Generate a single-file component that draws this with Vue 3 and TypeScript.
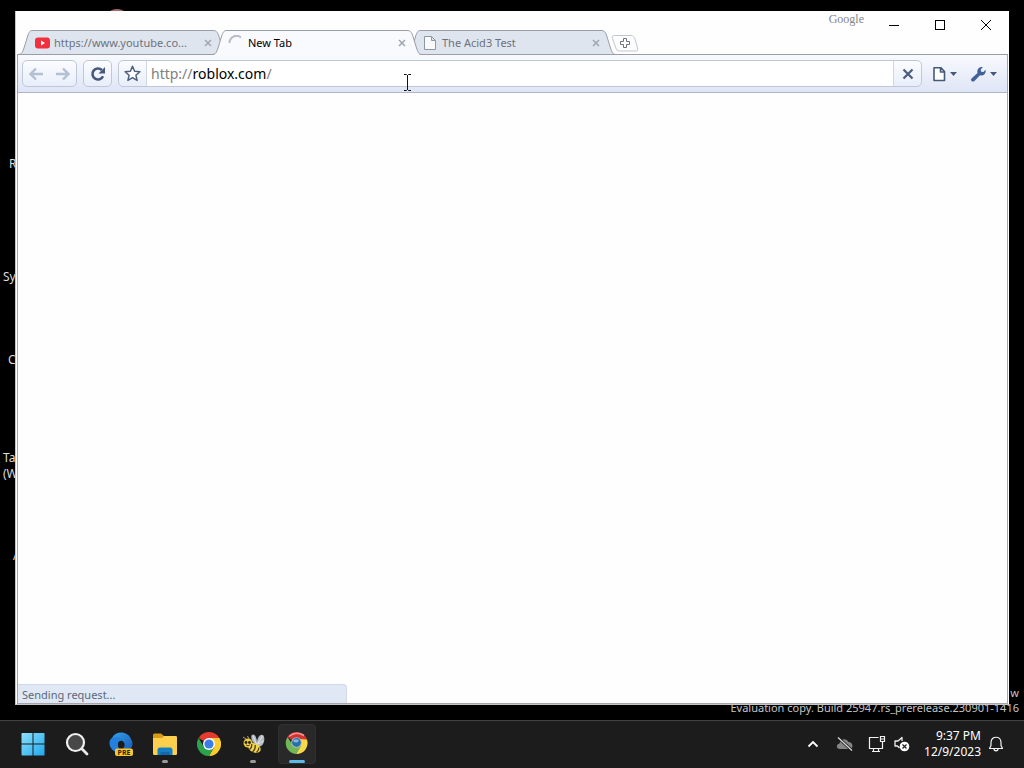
<script setup lang="ts">
import { ref } from 'vue'

interface Tab {
  title: string
  icon: 'video' | 'spinner' | 'page'
  active: boolean
}

const tabs: Tab[] = [
  { title: 'https://www.youtube.co...', icon: 'video', active: false },
  { title: 'New Tab', icon: 'spinner', active: true },
  { title: 'The Acid3 Test', icon: 'page', active: false },
]

const address = ref('http://roblox.com/')
</script>

<template>
  <div class="screen">
    <main class="desktop">
      <div class="orb"></div>
      <span class="label recycle">R</span>
      <span class="label system">Sy</span>
      <span class="label control">C</span>
      <span class="label task">Ta<br />(W</span>
      <span class="label app">A</span>
      <div class="watermark">w<br />Evaluation copy. Build 25947.rs_prerelease.230901-1416</div>

      <section class="window">
        <header class="titlebar">
          <div class="tabs">
            <div v-for="tab in tabs" :key="tab.title" class="tab" :class="{ active: tab.active }">
              <svg class="shape" viewBox="0 0 208 25" preserveAspectRatio="none">
                <path class="fill" d="M0 25 C3 24.500 3.500 22 5 18 L9 5 C10.500 1.500 11 .5 14 .5 H194 C197 .5 198 1.500 199.500 5 L203.500 18 C205 22 205.500 24.500 208 25 Z" />
                <path class="edge" d="M0 24.500 C3 24 3.500 22 5 18 L9 5 C10.500 1.500 11 .5 14 .5 H194 C197 .5 198 1.500 199.500 5 L203.500 18 C205 22 205.500 24 208 24.500" />
                <path v-if="!tab.active" class="edge" d="M0 24.500 H208" />
              </svg>
              <svg v-if="tab.icon === 'video'" class="favicon" viewBox="0 0 16 16">
                <rect x="1" y="2.500" width="15" height="11" rx="3" fill="#f0303c" />
                <path d="M7 5.500 L11 8 L7 10.500 Z" fill="#fff" />
              </svg>
              <svg v-else-if="tab.icon === 'spinner'" class="favicon" viewBox="0 0 16 16">
                <path d="M1.500 8 A7 7 0 0 1 13 2.500" fill="none" stroke="#b4bcc8" stroke-width="2" />
              </svg>
              <svg v-else class="favicon" viewBox="0 0 16 16">
                <path d="M2.500 1.500 H9.500 L13.500 5.500 V14.500 H2.500 Z M9.500 1.500 V5.500 H13.500" fill="#f8fafc" stroke="#9097a0" />
              </svg>
              <span class="title">{{ tab.title }}</span>
              <button class="close" :aria-label="'Close ' + tab.title">
                <svg viewBox="0 0 8 8" width="8" height="8"><path d="M1 1 L7 7 M7 1 L1 7" stroke="#a2a8b2" stroke-width="1.600" /></svg>
              </button>
            </div>
            <button class="newtab" aria-label="New tab">
              <svg viewBox="0 0 28 17" width="28" height="17">
                <path d="M4 .5 H20 C22 .5 23 1.500 24 4 L26.500 13 C27 15.500 26.500 16 25 16 H8.500 C6.500 16 5.500 15 4.500 12 L1.500 3.500 C.8 1.200 1.500 .5 4 .5 Z" fill="#fcfdff" stroke="#c3c6cc" />
                <path d="M12.500 3.500 H15.500 V6.500 H18.500 V9.500 H15.500 V12.500 H12.500 V9.500 H9.500 V6.500 H12.500 Z" fill="#fff" stroke="#6e7278" />
              </svg>
            </button>
          </div>
          <div class="controls">
            <span class="brand">Google</span>
            <button aria-label="Minimize"><svg viewBox="0 0 12 12"><path d="M1 6.500 H11" /></svg></button>
            <button aria-label="Maximize"><svg viewBox="0 0 12 12"><rect x="1.500" y="1.500" width="9" height="9" /></svg></button>
            <button aria-label="Close"><svg viewBox="0 0 12 12"><path d="M1 1 L11 11 M11 1 L1 11" /></svg></button>
          </div>
        </header>

        <div class="frame">
          <nav class="toolbar">
            <div class="group history">
              <button aria-label="Back">
                <svg viewBox="0 0 16 16" width="16" height="16"><path d="M8 2.500 L2.500 8 L8 13.500 M3 8 H15" fill="none" stroke="#b3bfd2" stroke-width="2.400" /></svg>
              </button>
              <button aria-label="Forward">
                <svg viewBox="0 0 16 16" width="16" height="16"><path d="M8 2.500 L13.500 8 L8 13.500 M13 8 H1" fill="none" stroke="#b3bfd2" stroke-width="2.400" /></svg>
              </button>
            </div>
            <button class="group reload" aria-label="Reload">
              <svg viewBox="0 0 16 16" width="16" height="16">
                <path d="M13 10.200 A5.500 5.500 0 1 1 11.800 4" fill="none" stroke="#46597b" stroke-width="2.600" />
                <path d="M15 1 V7.500 H8.500 Z" fill="#46597b" />
              </svg>
            </button>
            <form class="group omnibox" @submit.prevent>
              <button type="button" class="star" aria-label="Bookmark this page">
                <svg viewBox="0 0 17 17" width="17" height="17"><path d="M8.500 1.300 L10.600 6.200 L15.900 6.700 L11.900 10.200 L13.100 15.400 L8.500 12.600 L3.900 15.400 L5.100 10.200 L1.100 6.700 L6.400 6.200 Z" fill="#fff" stroke="#4c5f80" stroke-width="1.500" stroke-linejoin="round" /></svg>
              </button>
              <div class="address">
                <input v-model="address" aria-label="Address" spellcheck="false" />
                <div class="tinted" aria-hidden="true"><i>http://</i>roblox.com<i>/</i></div>
              </div>
              <button type="button" class="stop" aria-label="Stop">
                <svg viewBox="0 0 12 12" width="12" height="12"><path d="M1.500 1.500 L10.500 10.500 M10.500 1.500 L1.500 10.500" stroke="#4a5c7c" stroke-width="2.200" /></svg>
              </button>
            </form>
            <button class="menu" aria-label="Page menu">
              <svg viewBox="0 0 26 16" width="26" height="16">
                <path d="M2 1.800 H9 L12.500 5.500 V14.500 H2 Z M8.500 2 V6 H12.500" fill="#fff" stroke="#46597b" stroke-width="1.600" stroke-linejoin="round" />
                <path d="M18 6 H25 L21.500 10 Z" fill="#46597b" />
              </svg>
            </button>
            <button class="menu" aria-label="Settings menu">
              <svg viewBox="0 0 28 16" width="28" height="16">
                <path d="M1.500 12.500 L7.500 7 C6.500 3.500 9 .6 13 1.100 L10.700 3.600 L11.200 5.700 L13.400 6 L15.600 3.800 C16.300 7.500 13.500 10.200 10 9.300 L4.500 15 C2.500 16.500 0 14.500 1.500 12.500 Z" fill="#42629a" />
                <path d="M20 6 H27 L23.500 10 Z" fill="#46597b" />
              </svg>
            </button>
          </nav>
          <div class="page">
            <div class="status">Sending request...</div>
          </div>
        </div>
      </section>

      <svg class="caret" viewBox="0 0 9 17" width="9" height="17"><path d="M1 .5 H3.500 L4.500 1.500 L5.500 .5 H8 M4.500 1 V16 M1 16.500 H3.500 L4.500 15.500 L5.500 16.500 H8" fill="none" stroke="#111" /></svg>
    </main>

    <footer class="taskbar">
      <div class="apps">
        <button aria-label="Start">
          <svg viewBox="0 0 24 24">
            <defs><linearGradient id="win" x1="0" y1="0" x2="24" y2="24" gradientUnits="userSpaceOnUse"><stop offset="0" stop-color="#8ee4fb" /><stop offset="1" stop-color="#1ea6ee" /></linearGradient></defs>
            <path d="M1 1 H11.500 V11.500 H0.500 V1.500 Z M12.500 1 H23 L23.500 1.500 V11.500 H12.500 Z M.5 12.500 H11.500 V23.500 H1 L.5 23 Z M12.500 12.500 H23.500 V23 L23 23.500 H12.500 Z" fill="url(#win)" />
          </svg>
        </button>
        <button aria-label="Search">
          <svg viewBox="0 0 24 24"><circle cx="10.500" cy="10.500" r="8.500" fill="#484848" stroke="#f0f0f0" stroke-width="2.200" /><path d="M16.800 16.800 L22 22" stroke="#e8e8e8" stroke-width="2.800" stroke-linecap="round" /></svg>
        </button>
        <button aria-label="Edge preview">
          <svg viewBox="0 0 24 24">
            <defs><linearGradient id="edge" x1="0" y1="0" x2="1" y2="1"><stop offset="0" stop-color="#35a5ec" /><stop offset="1" stop-color="#1759b8" /></linearGradient></defs>
            <path d="M3 6 C7 -2 19 -1 22 7 C24.500 11 23.500 15 21 17 H14 C16.500 14 16 10.500 13.500 9 C10 7.500 8 11 9 14 L10 20 H7 C1 17 -1 10 3 6 Z" fill="url(#edge)" />
            <path d="M1 8 C4 4 10 4 14 8 C10 7.500 8 10.500 9 14 L11 21 C3 20 -1 14 1 8 Z" fill="#2381dd" />
            <rect x="6" y="16.500" width="18" height="7.500" rx="2" fill="#fdc82f" />
            <text x="15" y="23" text-anchor="middle" class="pre">PRE</text>
          </svg>
        </button>
        <button aria-label="File Explorer">
          <svg viewBox="0 0 24 24">
            <path d="M0 3 Q0 1.500 1.500 1.500 H8 L11 4 H22.500 Q24 4 24 5.500 V10 H0 Z" fill="#d99a16" />
            <path d="M0 6 H9 L11 4 H22.500 Q24 4 24 5.500 V22 Q24 23 22.500 23 H1.500 Q0 23 0 22 Z" fill="#fccf4d" />
            <path d="M4.500 23 V18 Q4.500 15.500 7 15.500 H17 Q19.500 15.500 19.500 18 V23 Z" fill="#157fc6" /><path d="M7.500 20 H16.500 V23 H7.500 Z" fill="#0f69aa" />
          </svg>
          <i class="dot"></i>
        </button>
        <button aria-label="Chrome">
          <svg viewBox="0 0 24 24">
            <path d="M12 12 L1.600 6 A12 12 0 0 1 22.400 6 Z" fill="#e33b2e" />
            <path d="M12 6 H22.400 A12 12 0 0 1 12 24 L17.200 15 Z" fill="#fccb30" />
            <path d="M1.600 6 A12 12 0 0 0 12 24 L17.200 15 L12 16 L6.800 15 Z" fill="#2da24c" />
            <circle cx="12" cy="12" r="6" fill="#fff" /><circle cx="12" cy="12" r="4.600" fill="#3a7ce8" />
          </svg>
        </button>
        <button aria-label="Bee">
          <svg viewBox="0 0 24 24">
            <path d="M14 12 C10 9 9 3 12 2.500 C15 2.500 16 8 16 11 C16 5 20 1 22.500 3.500 C24.500 7 23 15 17 14.500 Z" fill="#b3bac4" />
            <path d="M12 4 L15.500 12 M21.500 4 L16.500 12 M22 9 L16.500 12.500" stroke="#edf1f4" stroke-width=".8" />
            <circle cx="7" cy="11" r="4.500" fill="#e9cb36" />
            <ellipse cx="13.500" cy="16" rx="6.500" ry="4.500" transform="rotate(25 13.500 16)" fill="#f4d64c" />
            <path d="M10.500 12 Q11.500 15.500 8.500 17.500 M14 13 Q15 17 11.500 20 M18 15.500 Q18 18 15.500 20.500" fill="none" stroke="#4a3b1a" stroke-width="1.300" />
            <circle cx="5" cy="10.500" r="1.400" fill="#222" /><circle cx="8.500" cy="10.500" r="1.400" fill="#222" />
            <path d="M5 13 Q7 14.500 9 13" fill="none" stroke="#5f4816" /><path d="M5 7 L2 5 M8 7 L6.500 4" stroke="#b6a76b" />
          </svg>
          <i class="dot"></i>
        </button>
        <button class="current" aria-label="Chrome window">
          <svg viewBox="0 0 24 24">
            <path d="M11.500 11 L2.500 5 A11 11 0 0 1 22 7.500 Z" fill="#d53230" />
            <path d="M12 7 L22 7.500 A11 11 0 0 1 11 22 L15.500 14 Z" fill="#f6d849" />
            <path d="M2.500 5 A11 11 0 0 0 11 22 L16 14 L11 15 L7 12 Z" fill="#72b657" />
            <path d="M4 4.500 Q11 -1.500 19 3.500" fill="none" stroke="#ee9c93" stroke-width="1.500" />
            <circle cx="11.500" cy="10.500" r="5.300" fill="#aebfc8" /><circle cx="11.500" cy="10.500" r="4.400" fill="#286fa9" /><ellipse cx="11" cy="8.800" rx="2.800" ry="1.600" fill="#83b8db" />
          </svg>
          <i class="bar"></i>
        </button>
      </div>

      <div class="tray">
        <button class="chevron" aria-label="Show hidden icons"><svg viewBox="0 0 12 12" width="12" height="12"><path d="M1.500 8.500 L6 4 L10.500 8.500" fill="none" stroke="#fff" stroke-width="1.800" /></svg></button>
        <button class="cloud" aria-label="OneDrive">
          <svg viewBox="0 0 18 16" width="18" height="16"><path d="M4 13 C0 13 0 8 3.500 7.500 C4 3 10 1.500 12.500 6 C17 6 18 12.500 14 13 Z" fill="#858585" /><path d="M2 1.500 L16 14.500" stroke="#1d1d1d" stroke-width="3" /><path d="M2 1.500 L16 14.500" stroke="#ddd" stroke-width="1.200" /></svg>
        </button>
        <button class="net" aria-label="Network and sound">
          <svg viewBox="0 0 18 18" width="18" height="18"><path d="M10.500 2.500 H1.500 V13.500 H14.500 V9 M5.500 13.500 V16.500 M10.500 13.500 V16.500 M4 16.500 H12 M12.500 1.500 H16.500 V6.500 H12.500 Z M13 4 H16 M14.500 6.500 V10" fill="none" stroke="#f1f1f1" stroke-width="1.200" /></svg>
          <svg viewBox="0 0 18 18" width="18" height="18"><path d="M9 6 V2.500 L5 6 H2 V11 H4.500 L6.500 13" fill="none" stroke="#f1f1f1" stroke-width="1.300" stroke-linejoin="round" /><circle cx="11.500" cy="11.500" r="4.800" fill="#fff" /><path d="M9.500 9.500 L13.500 13.500 M13.500 9.500 L9.500 13.500" stroke="#222" stroke-width="1.200" /></svg>
        </button>
        <button class="clock">9:37 PM<br />12/9/2023</button>
        <button class="bell" aria-label="Notifications"><svg viewBox="0 0 16 16" width="16" height="16"><path d="M1.500 12.500 L3 9.500 V6.500 C3 -.5 13 -.5 13 6.500 V9.500 L14.500 12.500 Z M6 12.800 C6 15.500 10 15.500 10 12.800" fill="none" stroke="#f4f4f4" stroke-width="1.200" stroke-linejoin="round" /></svg></button>
      </div>
    </footer>
  </div>
</template>

<style>
html,
body {
  background: #000;
}
</style>

<style scoped>
* {
  box-sizing: border-box;
}
.screen {
  display: flex;
  flex-direction: column;
  min-height: 100vh;
  overflow: hidden;
  background: #000;
  color: #fff;
  font: 12px/16px "Noto Sans", "Open Sans", sans-serif;
}
button {
  display: flex;
  align-items: center;
  justify-content: center;
  flex: none;
  margin: 0;
  padding: 0;
  border: 0;
  background: none;
  color: inherit;
  font: inherit;
}
.desktop {
  position: relative;
  flex: 1;
}
.orb {
  position: absolute;
  left: 104px;
  top: 9px;
  width: 26px;
  height: 26px;
  border-radius: 50%;
  background: #a6686a;
}
.label {
  position: absolute;
  color: #ddd;
}
.recycle {
  left: 9px;
  top: 156px;
}
.system {
  left: 3px;
  top: 269px;
}
.control {
  left: 8px;
  top: 352px;
}
.task {
  left: 3px;
  top: 450px;
}
.app {
  left: 13px;
  top: 548px;
}
.watermark {
  position: absolute;
  right: 5px;
  bottom: 5px;
  color: #c4c4c4;
  font-size: 11px;
  line-height: 15px;
  text-align: right;
}
.window {
  position: absolute;
  inset: 11px 15px 15px;
  display: flex;
  flex-direction: column;
  padding: 0 1px;
  background: #fefefe;
  border-left: 1px solid #c9c6c8;
  border-bottom: 1px solid #c9c6c8;
  color: #000;
}
.titlebar {
  display: flex;
  justify-content: space-between;
  height: 44px;
  border-bottom: 1px solid #9a9ea8;
}
.tabs {
  display: flex;
  align-items: flex-end;
  padding-left: 2px;
  margin-bottom: -1px;
}
.tab {
  position: relative;
  display: flex;
  align-items: center;
  width: 208px;
  height: 25px;
  margin-right: -14px;
  padding: 1px 13px 0 15px;
  color: #6c727c;
}
.tab.active {
  z-index: 1;
  color: #000;
}
.shape {
  position: absolute;
  inset: 0;
  width: 100%;
  height: 100%;
}
.fill {
  fill: #dfe5ef;
}
.active .fill {
  fill: #f8fafe;
}
.edge {
  fill: none;
  stroke: #9a9ea8;
}
.favicon {
  position: relative;
  flex: none;
  width: 16px;
  height: 16px;
}
.title {
  position: relative;
  flex: 1;
  margin-left: 4px;
  font-size: 11px;
  white-space: nowrap;
}
.close {
  position: relative;
  width: 12px;
  height: 12px;
}
.newtab {
  width: 28px;
  height: 17px;
  margin: 0 0 3px 10px;
}
.controls {
  display: flex;
  align-items: flex-start;
  margin-right: -1px;
}
.controls button {
  width: 46px;
  height: 28px;
}
.controls svg {
  width: 12px;
  height: 12px;
  fill: none;
  stroke: #000;
}
.brand {
  margin-right: 7px;
  color: #84868c;
  font: 12px/17px "Liberation Serif", serif;
}
.frame {
  display: flex;
  flex-direction: column;
  flex: 1;
  border: 1px solid #a4a4aa;
  border-top: 0;
}
.toolbar {
  display: flex;
  align-items: center;
  height: 38px;
  padding: 0 9px 0 4px;
  border-bottom: 1px solid #aeb6c6;
  background: linear-gradient(#f8fafe, #dfe5f6);
}
.group {
  display: flex;
  height: 27px;
  border: 1px solid #c0c8d8;
  border-radius: 5px;
  background: linear-gradient(#fbfcff, #e8eefa);
}
.history {
  width: 55px;
}
.history button {
  flex: 1;
}
.reload {
  width: 29px;
  margin: 0 6px;
}
.omnibox {
  flex: 1;
  margin-right: 10px;
}
.star {
  width: 28px;
  border-right: 1px solid #d0d7e4;
}
.stop {
  width: 28px;
  border-left: 1px solid #d0d7e4;
}
.address {
  display: grid;
  flex: 1;
  background: #fff;
}
.address input,
.tinted {
  grid-area: 1 / 1;
  min-width: 0;
  margin: 0;
  padding: 0 4px;
  border: 0;
  outline: 0;
  background: none;
  font: 14px/25px "Noto Sans", "Open Sans", sans-serif;
}
.address input {
  color: transparent;
}
.tinted {
  pointer-events: none;
}
.tinted i {
  color: #808080;
  font-style: normal;
}
.menu {
  height: 27px;
}
.menu + .menu {
  margin-left: 12px;
}
.page {
  display: flex;
  align-items: flex-end;
  flex: 1;
  background: #fefefe;
}
.status {
  width: 33.3%;
  height: 19px;
  padding: 0 4px;
  border: 1px solid #d2dae6;
  border-width: 1px 1px 0 0;
  border-radius: 0 4px 0 0;
  background: #dfe8f4;
  color: #5c6878;
  font-size: 11px;
  line-height: 19px;
}
.caret {
  position: absolute;
  left: 403px;
  top: 74px;
}
.taskbar {
  display: flex;
  justify-content: space-between;
  align-items: center;
  height: 48px;
  padding-bottom: 1px;
  border-top: 1px solid #424242;
  background: #1c1c1c;
}
.apps {
  display: flex;
  gap: 6px;
  padding-left: 14px;
}
.apps button {
  position: relative;
  width: 38px;
  height: 40px;
  border: 1px solid transparent;
  border-radius: 4px;
}
.apps svg {
  width: 24px;
  height: 24px;
}
.apps .current {
  border-color: #303030;
  background: #292929;
}
.pre {
  fill: #2b2408;
  font: bold 7px "Noto Sans", sans-serif;
}
.dot,
.bar {
  position: absolute;
  bottom: 0;
  width: 6px;
  height: 3px;
  border-radius: 2px;
  background: #9a9a9a;
}
.bar {
  width: 16px;
  background: #5db8ea;
}
.tray {
  display: flex;
  align-items: center;
  padding-right: 20px;
}
.cloud {
  margin-left: 17px;
}
.net {
  gap: 7px;
  margin-left: 14px;
}
.clock {
  margin: 0 7px 0 13px;
  text-align: right;
}
</style>
